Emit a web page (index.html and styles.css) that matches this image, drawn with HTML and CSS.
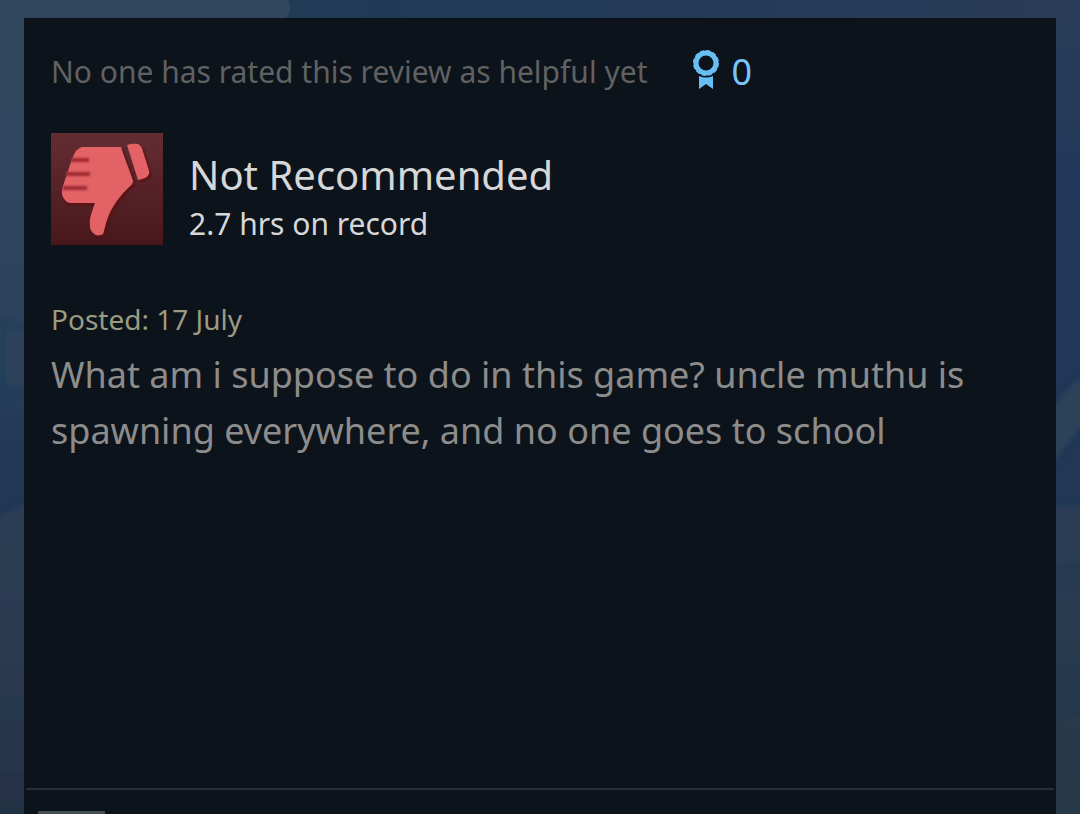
FILE: index.html
```html
<!DOCTYPE html>
<html lang="en">
<head>
    <meta charset="UTF-8">
    <meta name="viewport" content="width=device-width, initial-scale=1.0">
    <title>Review</title>
    <link rel="stylesheet" href="styles.css">
</head>
<body>
    <!-- Mountain backdrop -->
    <svg class="backdrop" viewBox="0 0 1080 814" preserveAspectRatio="none" aria-hidden="true">
        <defs>
            <linearGradient id="skyLeft" x1="0" y1="0" x2="0" y2="1">
                <stop offset="0" stop-color="#30465c"/>
                <stop offset="0.2" stop-color="#2f475f"/>
                <stop offset="0.38" stop-color="#2c435c"/>
                <stop offset="0.46" stop-color="#29415b"/>
                <stop offset="0.56" stop-color="#203756"/>
                <stop offset="1" stop-color="#203756"/>
            </linearGradient>
            <linearGradient id="skyRight" x1="0" y1="0" x2="0" y2="1">
                <stop offset="0" stop-color="#293d58"/>
                <stop offset="0.14" stop-color="#263b59"/>
                <stop offset="0.22" stop-color="#213759"/>
                <stop offset="0.5" stop-color="#213757"/>
                <stop offset="0.62" stop-color="#213753"/>
                <stop offset="0.75" stop-color="#293b50"/>
                <stop offset="1" stop-color="#263747"/>
            </linearGradient>
            <linearGradient id="hill" x1="0" y1="0" x2="0" y2="1">
                <stop offset="0" stop-color="#2d3e55"/>
                <stop offset="0.5" stop-color="#2a3a50"/>
                <stop offset="1" stop-color="#243144"/>
            </linearGradient>
            <linearGradient id="skyTop" x1="0" y1="0" x2="1" y2="0">
                <stop offset="0" stop-color="#203b56"/>
                <stop offset="0.4" stop-color="#223a57"/>
                <stop offset="1" stop-color="#293c58"/>
            </linearGradient>
            <filter id="haze" x="-50%" y="-20%" width="200%" height="140%">
                <feGaussianBlur stdDeviation="2"/>
            </filter>
        </defs>
        <rect width="540" height="814" fill="url(#skyLeft)"/>
        <rect x="540" width="540" height="814" fill="url(#skyRight)"/>
        <path d="M288 0H1080V18H286Q293 9 288 0Z" fill="url(#skyTop)"/>
        <g filter="url(#haze)">
            <path d="M6 334H30V385H6Z" fill="#31455a" opacity="0.7"/>
            <path d="M-6 320L30 330M-6 390L30 392M4 326V400" stroke="#203a59" stroke-width="4" fill="none" opacity="0.6"/>
            <path d="M-6 520L30 500V820H-6Z" fill="url(#hill)"/>
            <path d="M1050 410L1076 380L1086 382V420L1050 466Z" fill="#30435a" opacity="0.8"/>
            <path d="M1050 506H1086V560L1050 566Z" fill="#293d55"/>
            <path d="M1050 665H1086V705L1050 722Z" fill="#22364f" opacity="0.7"/>
        </g>
    </svg>

    <main class="review">
        <div class="review-body">
            <div class="helpful">
                <span>No one has rated this review as helpful yet</span>
                <span class="awards">
                    <svg class="award-icon" viewBox="0 0 28 44" aria-hidden="true">
                        <circle cx="14" cy="13" r="10" fill="none" stroke="#67bff5" stroke-width="5"/>
                        <circle cx="14" cy="13" r="12" fill="none" stroke="#67bff5" stroke-width="2" stroke-dasharray="4 2.28"/>
                        <path d="M7 26Q14 29 21 26V39L14 34L7 39Z" fill="#67bff5"/>
                    </svg>
                    <span>0</span>
                </span>
            </div>

            <div class="rating">
                <svg class="thumb" viewBox="0 0 112 112" role="img" aria-label="Thumbs down">
                    <defs>
                        <linearGradient id="thumbBg" x1="0" y1="0" x2="0" y2="1">
                            <stop offset="0" stop-color="#632d33"/>
                            <stop offset="1" stop-color="#48171c"/>
                        </linearGradient>
                        <filter id="thumbShadow" x="-10%" y="-10%" width="120%" height="120%">
                            <feDropShadow dx="2" dy="2" stdDeviation="1" flood-color="#5d090e" flood-opacity="0.9"/>
                        </filter>
                        <filter id="foldSoft" x="-10%" y="-20%" width="120%" height="140%">
                            <feGaussianBlur stdDeviation="0.8"/>
                        </filter>
                    </defs>
                    <rect width="112" height="112" fill="url(#thumbBg)"/>
                    <g fill="#e26265" filter="url(#thumbShadow)">
                        <path d="M31 14H70Q72 21 77 34L82 48Q82 51 77 55C66 66 59 76 55 90L52 101Q49 103 45 102Q39 99 39 93C38 85 41 79 44 70H19Q14 69 11 62V58Q11 56 12 53L21 26Q25 15 31 14Z"/>
                        <path d="M76 12Q81 10 87 11Q91 13 92 19L98 38Q99 42 94 45L87 47Z"/>
                    </g>
                    <path d="M20 27H38M15 41H39M12 55H36" stroke="#a02c32" stroke-width="4" fill="none" filter="url(#foldSoft)"/>
                </svg>
                <div class="rating-text">
                    <h1 class="verdict">Not Recommended</h1>
                    <div class="hours">2.7 hrs on record</div>
                </div>
            </div>

            <div class="posted">Posted: 17 July</div>
            <p class="content">What am i suppose to do in this game? uncle muthu is spawning everywhere, and no one goes to school</p>
        </div>

        <div class="author">
            <div class="avatar"></div>
        </div>
    </main>
</body>
</html>
```
FILE: styles.css
```css
* {
    box-sizing: border-box;
}

body {
    margin: 0;
    height: 100vh;
    padding: 18px 24px 0;
    display: flex;
    background: #263a54;
    font-family: "Noto Sans", sans-serif;
    color: #8c8c8c;
}

.backdrop {
    position: fixed;
    inset: 0;
    z-index: -1;
    width: 100%;
    height: 100%;
}

.review {
    flex: 1;
    display: flex;
    flex-direction: column;
    padding: 0 2px;
    background: #0c131a;
}

.review-body {
    flex: 1;
    padding: 30px 25px 0;
}

.helpful {
    display: flex;
    align-items: center;
    gap: 44px;
    font-size: 30px;
    line-height: 48px;
    color: #606162;
}

.awards {
    display: flex;
    align-items: center;
    gap: 12px;
    font-size: 36px;
    color: #7cc4f8;
}

.award-icon {
    width: 28px;
    height: 44px;
}

.rating {
    display: flex;
    gap: 26px;
    margin-top: 37px;
}

.thumb {
    width: 112px;
    height: 112px;
}

.rating-text {
    padding-top: 14px;
}

.verdict {
    margin: 0;
    font-size: 40px;
    font-weight: normal;
    line-height: 56px;
    color: #d6d7d8;
}

.hours {
    font-size: 30px;
    line-height: 42px;
    color: #d6d7d8;
}

.posted {
    margin-top: 54px;
    font-size: 28px;
    line-height: 40px;
    color: #9b9b83;
}

.content {
    margin: 8px 0 0;
    font-size: 36px;
    line-height: 56px;
}

.author {
    height: 26px;
    padding: 21px 12px 0;
    border-top: 2px solid #282f36;
    overflow: hidden;
}

.avatar {
    width: 67px;
    height: 67px;
    background: #434d52;
}
```
